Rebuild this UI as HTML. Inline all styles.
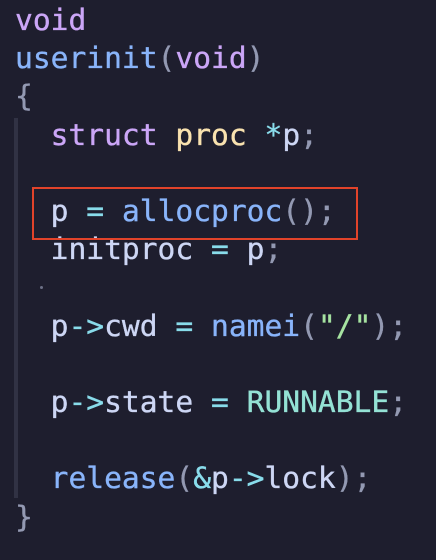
<!DOCTYPE html>
<html><head><meta charset="utf-8"><style>
html,body{margin:0;padding:0;background:#1e1e2e;width:436px;height:560px;overflow:hidden}
.c{position:absolute;left:15px;top:0;font-family:"DejaVu Sans Mono","Liberation Mono",monospace;font-size:29.6px;line-height:38.2px;color:#cdd6f4;white-space:pre;-webkit-text-stroke:0.35px currentColor}
.k{color:#cba6f7}.f{color:#89b4fa}.t{color:#f9e2af}.o{color:#89dceb}.p{color:#9399b2}.g{color:#a6e3a1}.e{color:#94e2d5}
.guide{position:absolute;left:14px;top:118px;width:4px;height:380px;background:#313244}
.box{position:absolute;left:32px;top:187px;width:322px;height:49px;border:2px solid #e2432a}
.dot{position:absolute;left:40px;top:286px;width:3px;height:3px;border-radius:50%;background:#6c7086}
</style></head><body>
<div class="guide"></div>
<div class="dot"></div>
<div class="c" style="top:1px"><span class="k">void</span>
<span class="f">userinit</span><span class="p">(</span><span class="k">void</span><span class="p">)</span>
<span class="p">{</span>
  <span class="k">struct</span> <span class="t">proc</span> <span class="o">*</span>p<span class="p">;</span>

  p <span class="o">=</span> <span class="f">allocproc</span><span class="p">();</span>
  initproc <span class="o">=</span> p<span class="p">;</span>

  p<span class="o">-&gt;</span>cwd <span class="o">=</span> <span class="f">namei</span><span class="p">(</span><span class="g">"/"</span><span class="p">);</span>

  p<span class="o">-&gt;</span>state <span class="o">=</span> <span class="e">RUNNABLE</span><span class="p">;</span>

  <span class="f">release</span><span class="p">(</span><span class="o">&amp;</span>p<span class="o">-&gt;</span>lock<span class="p">);</span>
<span class="p">}</span></div>
<div class="box"></div>
</body></html>
